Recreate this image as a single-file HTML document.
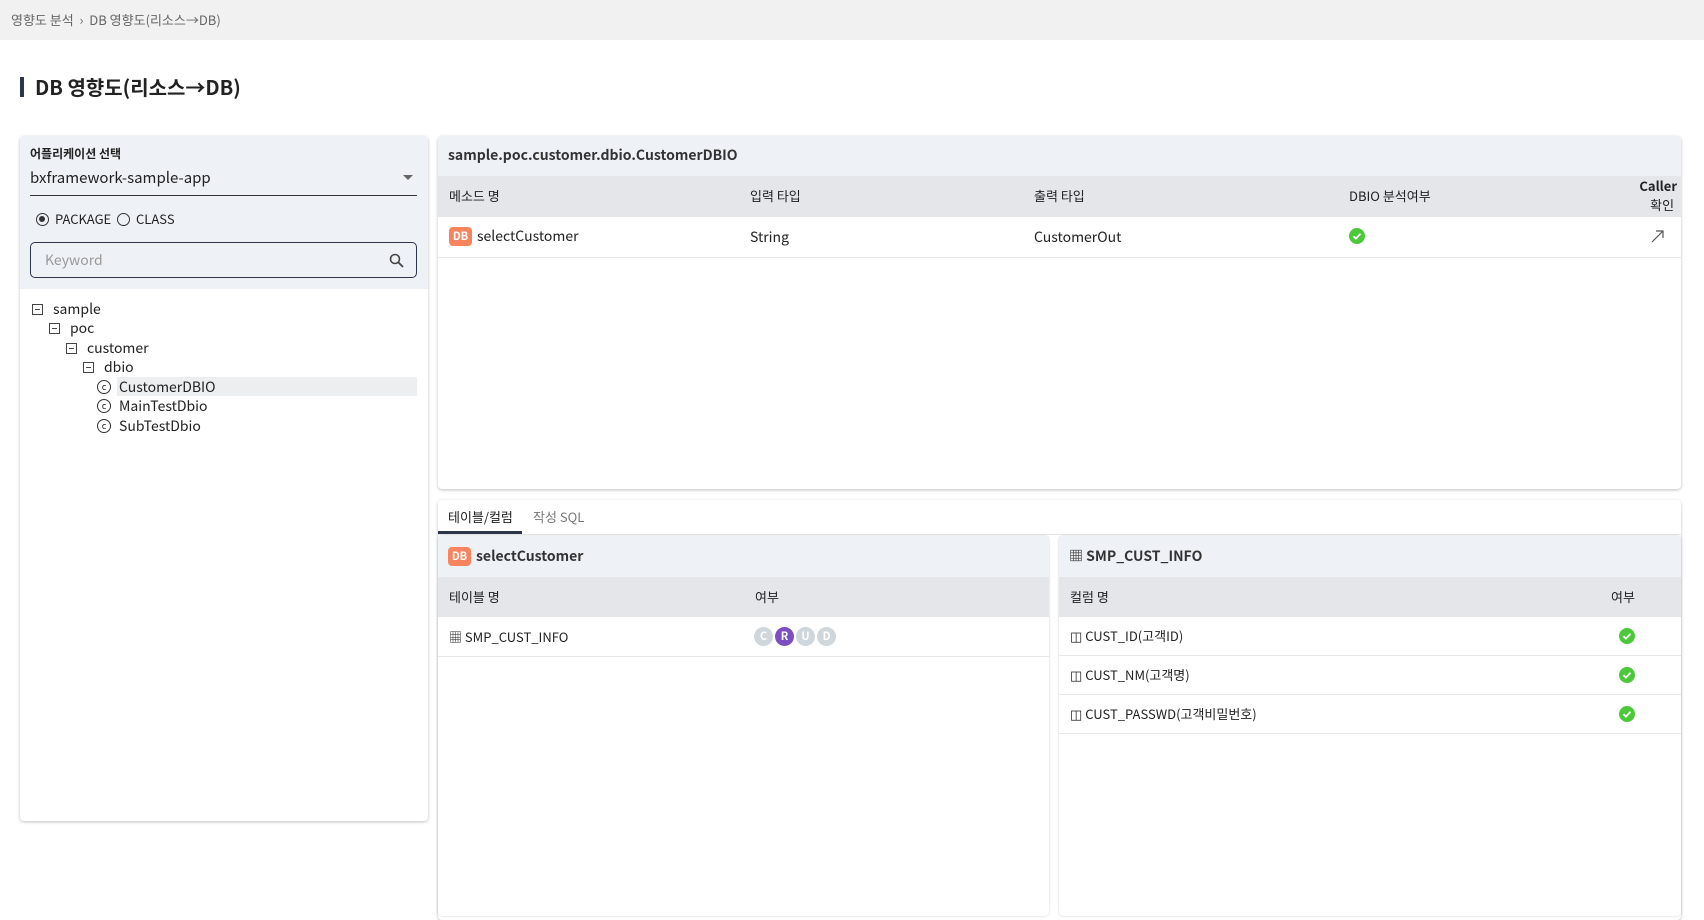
<!DOCTYPE html>
<html><head><meta charset="utf-8"><style>
*{box-sizing:border-box;margin:0;padding:0}
body{width:1704px;height:851px;overflow:hidden;background:#fff;font-family:"Noto Sans CJK KR","Liberation Sans",sans-serif;color:#222;font-size:14px;position:relative}
.a{position:absolute;line-height:20px}
.bc{left:0;top:0;width:1704px;height:40px;background:#f1f1f1;color:#666;font-size:13px;line-height:40px;padding-left:11px}
.panel{background:#fff;border-radius:4px;box-shadow:0 1px 3px rgba(0,0,0,.25)}
.th{background:#e4e6ea;font-size:13px;color:#222}
.db{display:inline-block;width:23px;height:19px;background:#f8845f;color:#fff;border-radius:4px;font-size:11px;font-weight:bold;text-align:center;line-height:19px;vertical-align:middle;margin-right:5px;position:relative;top:-1px}
.tree div{position:absolute;font-size:14px;height:20px;line-height:20px}
.mi{display:inline-block;width:11px;height:11px;border:1px solid #444;position:relative;vertical-align:middle;margin-right:10px;top:-1px}
.mi:after{content:"";position:absolute;left:2px;right:2px;top:4px;height:1px;background:#444}
.ci{display:inline-block;width:14px;height:14px;border:1px solid #333;border-radius:50%;font-size:9px;line-height:12px;text-align:center;vertical-align:middle;margin-right:8px;top:-1px;position:relative}
.row{border-bottom:1px solid #e6e8ec}
.crud{display:inline-block;width:19px;height:19px;border-radius:50%;background:#cfd6dc;color:#fff;font-size:11px;font-weight:bold;text-align:center;line-height:19px;margin-right:2px}
</style></head><body>
<div class="a bc">영향도 분석 &nbsp;›&nbsp; DB 영향도(리소스→DB)</div>
<div class="a" style="left:20px;top:77px;width:4px;height:20px;background:#2d3548"></div>
<div class="a" style="left:35px;top:73px;font-size:20px;line-height:28px;font-weight:bold;color:#222">DB 영향도(리소스→DB)</div>

<div class="a panel" style="left:20px;top:136px;width:408px;height:685px">
 <div class="a" style="left:0;top:0;width:408px;height:153px;background:#eef2f6;border-radius:4px 4px 0 0"></div>
 <div class="a" style="left:10px;top:8px;font-size:12px;font-weight:bold">어플리케이션 선택</div>
 <div class="a" style="left:10px;top:31px;font-size:15px;line-height:22px">bxframework-sample-app</div>
 <div class="a" style="left:383px;top:39px;width:0;height:0;border-left:5px solid transparent;border-right:5px solid transparent;border-top:5px solid #666"></div>
 <div class="a" style="left:10px;top:59px;width:387px;height:1px;background:#333"></div>
 <div class="a" style="left:16px;top:73px;font-size:13px;line-height:20px"><span style="display:inline-block;width:13px;height:13px;border:1.5px solid #333;border-radius:50%;vertical-align:-2px;position:relative;margin-right:6px"><span style="position:absolute;left:2px;top:2px;width:6px;height:6px;border-radius:50%;background:#333"></span></span>PACKAGE &nbsp;<span style="display:inline-block;width:13px;height:13px;border:1.5px solid #333;border-radius:50%;vertical-align:-2px;margin-right:6px"></span>CLASS</div>
 <div class="a" style="left:10px;top:106px;width:387px;height:36px;border:1px solid #2d3548;border-radius:5px;background:#eef2f6">
  <span class="a" style="left:14px;top:7px;color:#999;font-size:14px">Keyword</span>
  <svg class="a" style="right:12px;top:10px" width="15" height="15" viewBox="0 0 15 15"><circle cx="6" cy="6" r="4.5" fill="none" stroke="#444" stroke-width="1.6"/><line x1="9.5" y1="9.5" x2="14" y2="14" stroke="#444" stroke-width="1.8"/></svg>
 </div>
 <div class="tree">
  <div style="left:12px;top:163px"><span class="mi"></span>sample</div>
  <div style="left:29px;top:182px"><span class="mi"></span>poc</div>
  <div style="left:46px;top:202px"><span class="mi"></span>customer</div>
  <div style="left:63px;top:221px"><span class="mi"></span>dbio</div>
  <div style="left:97px;top:241px;width:300px;height:19px;background:#eceef0"></div>
  <div style="left:77px;top:241px"><span class="ci">c</span>CustomerDBIO</div>
  <div style="left:77px;top:260px"><span class="ci">c</span>MainTestDbio</div>
  <div style="left:77px;top:280px"><span class="ci">c</span>SubTestDbio</div>
 </div>
</div>

<div class="a panel" style="left:438px;top:136px;width:1243px;height:353px;overflow:hidden">
 <div class="a" style="left:0;top:0;width:1243px;height:40px;background:#eef2f6"></div>
 <div class="a" style="left:10px;top:9px;font-size:14px;font-weight:bold;color:#333">sample.poc.customer.dbio.CustomerDBIO</div>
 <div class="a th" style="left:0;top:40px;width:1243px;height:41px"></div>
 <div class="a" style="left:11px;top:50px;font-size:13px">메소드 명</div>
 <div class="a" style="left:312px;top:50px;font-size:13px">입력 타입</div>
 <div class="a" style="left:596px;top:50px;font-size:13px">출력 타입</div>
 <div class="a" style="left:911px;top:50px;font-size:13px">DBIO 분석여부</div>
 <div class="a" style="left:1180px;top:40px;width:59px;font-size:13px;text-align:right;line-height:19px"><b style="font-weight:bold">Caller</b><br>확인&nbsp;</div>
 <div class="a row" style="left:0;top:81px;width:1243px;height:41px"></div>
 <div class="a" style="left:11px;top:90px;font-size:14px"><span class="db">DB</span>selectCustomer</div>
 <div class="a" style="left:312px;top:91px;font-size:14px">String</div>
 <div class="a" style="left:596px;top:91px;font-size:14px">CustomerOut</div>
 <svg class="a" style="left:911px;top:92px" width="16" height="16"><circle cx="8" cy="8" r="8" fill="#4cc93a"/><path d="M4.5 8.2l2.4 2.4 4.6-4.8" fill="none" stroke="#fff" stroke-width="1.8"/></svg>
 <svg class="a" style="left:1213px;top:94px" width="13" height="13"><path d="M1 12L12 1M5 1h7v7" fill="none" stroke="#555" stroke-width="1.2"/></svg>
</div>

<div class="a panel" style="left:438px;top:500px;width:1243px;height:420px">
 <div class="a" style="left:10px;top:7px;font-size:13px;color:#222">테이블/컬럼</div>
 <div class="a" style="left:95px;top:7px;font-size:13px;color:#777">작성 SQL</div>
 <div class="a" style="left:0;top:31px;width:84px;height:3px;background:#2d3548"></div>
 <div class="a" style="left:0;top:34px;width:1243px;height:1px;background:#e4e6ea"></div>
 <div class="a panel" style="left:0;top:36px;width:611px;height:380px;box-shadow:0 0 2px rgba(0,0,0,.2)">
  <div class="a" style="left:0;top:0;width:611px;height:41px;background:#eef2f6"></div>
  <div class="a" style="left:10px;top:10px;font-size:14px;font-weight:bold;color:#333"><span class="db">DB</span>selectCustomer</div>
  <div class="a th" style="left:0;top:41px;width:611px;height:40px"></div>
  <div class="a" style="left:11px;top:51px;font-size:13px">테이블 명</div>
  <div class="a" style="left:317px;top:51px;font-size:13px">여부</div>
  <div class="a row" style="left:0;top:81px;width:611px;height:40px"></div>
  <div class="a" style="left:11px;top:91px;font-size:13px">&#9638; SMP_CUST_INFO</div>
  <div class="a" style="left:316px;top:91px;line-height:0"><span class="crud">C</span><span class="crud" style="background:#7b4fc2">R</span><span class="crud">U</span><span class="crud">D</span></div>
 </div>
 <div class="a panel" style="left:621px;top:36px;width:622px;height:380px;box-shadow:0 0 2px rgba(0,0,0,.2)">
  <div class="a" style="left:0;top:0;width:622px;height:41px;background:#eef2f6"></div>
  <div class="a" style="left:10px;top:10px;font-size:14px;font-weight:bold;color:#333">&#9638; SMP_CUST_INFO</div>
  <div class="a th" style="left:0;top:41px;width:622px;height:40px"></div>
  <div class="a" style="left:11px;top:51px;font-size:13px">컬럼 명</div>
  <div class="a" style="left:552px;top:51px;font-size:13px">여부</div>
  <div class="a row" style="left:0;top:81px;width:622px;height:39px"></div>
  <div class="a row" style="left:0;top:120px;width:622px;height:39px"></div>
  <div class="a row" style="left:0;top:159px;width:622px;height:39px"></div>
  <div class="a" style="left:11px;top:90px;font-size:13px">&#9707; CUST_ID(고객ID)</div>
  <div class="a" style="left:11px;top:129px;font-size:13px">&#9707; CUST_NM(고객명)</div>
  <div class="a" style="left:11px;top:168px;font-size:13px">&#9707; CUST_PASSWD(고객비밀번호)</div>
  <svg class="a" style="left:560px;top:92px" width="16" height="16"><circle cx="8" cy="8" r="8" fill="#4cc93a"/><path d="M4.5 8.2l2.4 2.4 4.6-4.8" fill="none" stroke="#fff" stroke-width="1.8"/></svg>
  <svg class="a" style="left:560px;top:131px" width="16" height="16"><circle cx="8" cy="8" r="8" fill="#4cc93a"/><path d="M4.5 8.2l2.4 2.4 4.6-4.8" fill="none" stroke="#fff" stroke-width="1.8"/></svg>
  <svg class="a" style="left:560px;top:170px" width="16" height="16"><circle cx="8" cy="8" r="8" fill="#4cc93a"/><path d="M4.5 8.2l2.4 2.4 4.6-4.8" fill="none" stroke="#fff" stroke-width="1.8"/></svg>
 </div>
</div>
</body></html>
